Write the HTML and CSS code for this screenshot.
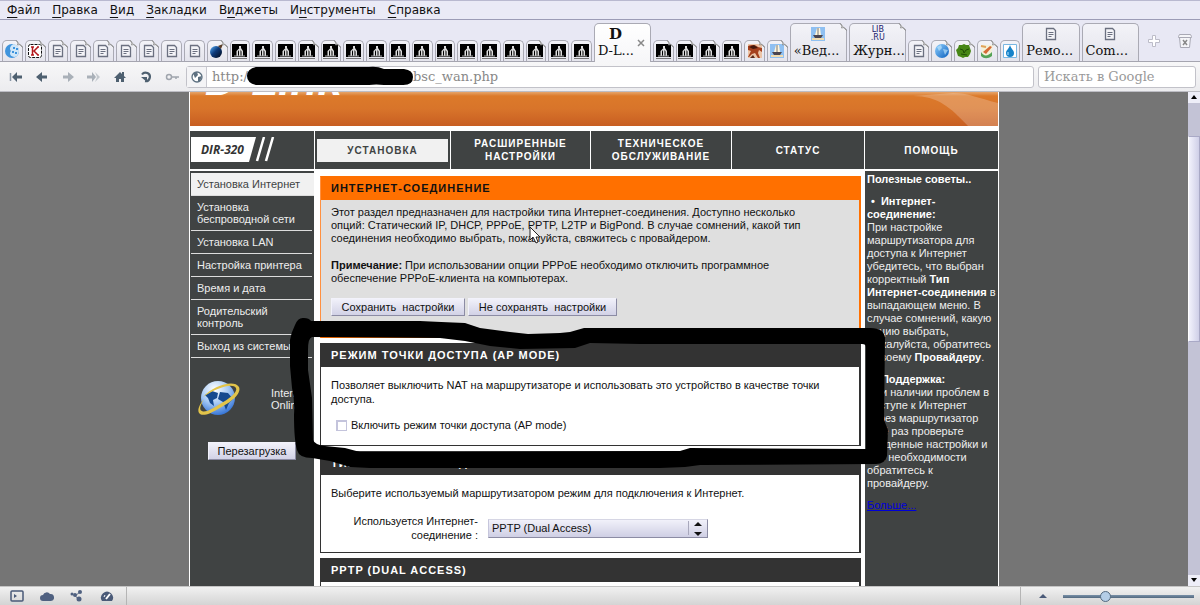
FILE: index.html
```html
<!DOCTYPE html>
<html lang="ru">
<head>
<meta charset="utf-8">
<title>D-Link</title>
<link rel="stylesheet" href="styles.css">
</head>
<body>
<svg class="defs" aria-hidden="true">
  <defs>
    <linearGradient id="ball" x1="0" y1="0" x2="1" y2="1"><stop offset="0" stop-color="#8fd0ff"/><stop offset="1" stop-color="#0b5fbd"/></linearGradient>
    <linearGradient id="bombfill" x1="0" y1="0" x2="1" y2="1"><stop offset="0" stop-color="#58b4ff"/><stop offset=".45" stop-color="#0d3a7a"/><stop offset="1" stop-color="#000818"/></linearGradient>
    <radialGradient id="earthfill" cx=".4" cy=".25" r=".8"><stop offset="0" stop-color="#fff"/><stop offset=".5" stop-color="#a8cbf5"/><stop offset="1" stop-color="#2a6cd4"/></radialGradient>
    <symbol id="doc" viewBox="0 0 16 16"><path d="M3.500 2.500h7l2 2v9h-9z" fill="#f4f4f8" stroke="#6b7080" stroke-width="1.300"/><path d="M5.500 6.500h5M5.500 8.500h5M5.500 10.500h3" stroke="#6b7080"/></symbol>
    <symbol id="n" viewBox="0 0 16 16"><path d="M0 1h15v13H0z"/><path d="M0 15.500h15" stroke="#777"/><path d="M7 3h2v2H7z" fill="#ddd"/><path d="M7.500 5h1.500l2 3v5h-1.500V8.500L8.500 7v6h-1.500V7L6 8.500V13H4.500V8z" fill="#ddd"/><path d="M2 13h11" stroke="#aaa"/></symbol>
    <symbol id="swirl" viewBox="0 0 16 16"><circle cx="8" cy="8" r="7" fill="#3f94dd"/><path d="M10 1a7 7 0 0 1 1 13c-5 0-6-4-4-6-2-2-1-6 3-7z" fill="#cfe6f8"/><path d="M9 4h2v2H9zM12 5h2v2h-2zM8 8h2v2H8zM11 9h2v2h-2z" fill="#3f94dd"/></symbol>
    <symbol id="k" viewBox="0 0 16 16"><rect x="1.500" y="1.500" width="13" height="13" rx="2" fill="#fff" stroke="#111" stroke-dasharray="3 1"/><path d="M5.500 4v8M11 4L7 8l4 4M4 4h3M4 12h3M10 4h2M10 12h2" stroke="#b3161b" stroke-width="1.500" fill="none"/></symbol>
    <symbol id="bomb" viewBox="0 0 16 16"><circle cx="7" cy="9" r="6" fill="url(#bombfill)"/><path d="M9 3l3 3 2-5z" fill="#5a3d28"/></symbol>
    <symbol id="fox" viewBox="0 0 16 16"><path d="M1 1h14v14H1z" fill="#ecc5a8"/><path d="M1 3c5-2 8-1 10 1l4 1v4l-3-2-1 3 2 5h-2l-3-5-3 1-3 3H1l3-6-3-1z" fill="#a5401d"/><path d="M2 4l5-2 4 3-5 1z" fill="#43180c"/><path d="M3 15l3-3 2 3z" fill="#5a2a1a"/></symbol>
    <symbol id="ship" viewBox="0 0 16 16"><path d="M1 1h14v14H1z" fill="#8fc0f2"/><path d="M7 2h3l1 7H5z" fill="#fff5dc"/><path d="M3 9h10l-2 3H5z" fill="#4a4550"/><path d="M8 2v7" stroke="#777"/><path d="M2 12h12v2H2z" fill="#f0dcb0"/></symbol>
    <symbol id="globe" viewBox="0 0 16 16"><circle cx="8" cy="8" r="7" fill="url(#ball)"/><path d="M3 4l4-2 1 3-3 3zM9 6l5 1-3 5z" fill="#c8ecff" opacity=".6"/></symbol>
    <symbol id="green" viewBox="0 0 16 16"><path d="M8 1l2 1 3 0 1 3 1 3-1 3-2 3-3 0-2 1-2-1-3-1-1-3-1-3 2-2 1-3 3 0z" fill="#478616"/><path d="M4 6l3 1 1 3 2-3 3-1M5 11l6 1" stroke="#214f07" fill="none"/></symbol>
    <symbol id="pen" viewBox="0 0 16 16"><path d="M2 2h12l-2 12H3z" fill="#f4f1d7"/><path d="M2 9c3 5 7 4 11 0v4c-4 3-8 3-11 0z" fill="#54a356"/><path d="M4 9l7-6 2 1-6 7z" fill="#d56b36"/><path d="M2 3l5 1" stroke="#e0a25c" stroke-width="2"/></symbol>
    <symbol id="drop" viewBox="0 0 16 16"><path d="M1.500 1.500h13v13h-13z" fill="#fff" stroke="#79b7e2"/><path d="M8 2c1 4 4 5 4 8a4 4 0 0 1-8 0c0-3 3-4 4-8z" fill="#1683c9"/><path d="M6 9v3" stroke="#b9e4ff"/></symbol>
    <symbol id="fold" viewBox="0 0 8 8"><path d="M1 0L8 7V0z" fill="#e7e7f3"/><path d="M1 .5C3 1 3 3 2.500 5 5 4 7 5 7.500 7.500z" fill="#fafafa" stroke="#888" stroke-width=".8"/></symbol>
  </defs>
</svg>

<nav class="menubar">
  <a href="#"><u>Ф</u>айл</a><a href="#"><u>П</u>равка</a><a href="#"><u>В</u>ид</a><a href="#"><u>З</u>акладки</a><a href="#">В<u>и</u>джеты</a><a href="#">И<u>н</u>струменты</a><a href="#"><u>С</u>правка</a>
</nav>

<div class="tabbar">
  <div class="tabs">
    <button class="tab" aria-label="Вкладка"><svg class="ico"><use href="#swirl"/></svg><svg class="fold"><use href="#fold"/></svg></button>
    <button class="tab" aria-label="Вкладка"><svg class="ico"><use href="#k"/></svg><svg class="fold"><use href="#fold"/></svg></button>
    <button class="tab" aria-label="Вкладка"><svg class="ico"><use href="#doc"/></svg><svg class="fold"><use href="#fold"/></svg></button>
    <button class="tab" aria-label="Вкладка"><svg class="ico"><use href="#doc"/></svg><svg class="fold"><use href="#fold"/></svg></button>
    <button class="tab" aria-label="Вкладка"><svg class="ico"><use href="#doc"/></svg><svg class="fold"><use href="#fold"/></svg></button>
    <button class="tab" aria-label="Вкладка"><svg class="ico"><use href="#doc"/></svg><svg class="fold"><use href="#fold"/></svg></button>
    <button class="tab" aria-label="Вкладка"><svg class="ico"><use href="#doc"/></svg><svg class="fold"><use href="#fold"/></svg></button>
    <button class="tab" aria-label="Вкладка"><svg class="ico"><use href="#doc"/></svg></button>
    <button class="tab" aria-label="Вкладка"><svg class="ico"><use href="#doc"/></svg></button>
    <button class="tab" aria-label="Вкладка"><svg class="ico"><use href="#bomb"/></svg><svg class="fold"><use href="#fold"/></svg></button>
    <button class="tab" aria-label="Вкладка"><svg class="ico"><use href="#n"/></svg></button>
    <button class="tab" aria-label="Вкладка"><svg class="ico"><use href="#n"/></svg></button>
    <button class="tab" aria-label="Вкладка"><svg class="ico"><use href="#n"/></svg></button>
    <button class="tab" aria-label="Вкладка"><svg class="ico"><use href="#n"/></svg><svg class="fold"><use href="#fold"/></svg></button>
    <button class="tab" aria-label="Вкладка"><svg class="ico"><use href="#n"/></svg><svg class="fold"><use href="#fold"/></svg></button>
    <button class="tab" aria-label="Вкладка"><svg class="ico"><use href="#n"/></svg></button>
    <button class="tab" aria-label="Вкладка"><svg class="ico"><use href="#n"/></svg></button>
    <button class="tab" aria-label="Вкладка"><svg class="ico"><use href="#n"/></svg></button>
    <button class="tab" aria-label="Вкладка"><svg class="ico"><use href="#n"/></svg></button>
    <button class="tab" aria-label="Вкладка"><svg class="ico"><use href="#n"/></svg></button>
    <button class="tab" aria-label="Вкладка"><svg class="ico"><use href="#n"/></svg></button>
    <button class="tab" aria-label="Вкладка"><svg class="ico"><use href="#n"/></svg></button>
    <button class="tab" aria-label="Вкладка"><svg class="ico"><use href="#n"/></svg></button>
    <button class="tab" aria-label="Вкладка"><svg class="ico"><use href="#n"/></svg><svg class="fold"><use href="#fold"/></svg></button>
    <button class="tab" aria-label="Вкладка"><svg class="ico"><use href="#n"/></svg></button>
    <button class="tab" aria-label="Вкладка"><svg class="ico"><use href="#n"/></svg></button>
    <button class="tab wide active"><span class="dico">D</span><span class="cap">D-L...</span><svg class="close" viewBox="0 0 8 8"><path d="M1 1l6 6M7 1L1 7" stroke="#888" stroke-width="1.500"/></svg></button>
    <button class="tab" aria-label="Вкладка"><svg class="ico"><use href="#n"/></svg><svg class="fold"><use href="#fold"/></svg></button>
    <button class="tab" aria-label="Вкладка"><svg class="ico"><use href="#n"/></svg><svg class="fold"><use href="#fold"/></svg></button>
    <button class="tab" aria-label="Вкладка"><svg class="ico"><use href="#n"/></svg><svg class="fold"><use href="#fold"/></svg></button>
    <button class="tab" aria-label="Вкладка"><svg class="ico"><use href="#n"/></svg></button>
    <button class="tab" aria-label="Вкладка"><svg class="ico"><use href="#fox"/></svg><svg class="fold"><use href="#fold"/></svg></button>
    <button class="tab" aria-label="Вкладка"><svg class="ico"><use href="#ship"/></svg><svg class="fold"><use href="#fold"/></svg></button>
    <button class="tab wide"><svg class="ico"><use href="#ship"/></svg><span class="cap">«Вед...</span><svg class="fold"><use href="#fold"/></svg></button>
    <button class="tab wide"><span class="lib">LIB<br>.RU</span><span class="cap">Журн...</span><svg class="fold"><use href="#fold"/></svg></button>
    <button class="tab" aria-label="Вкладка"><svg class="ico"><use href="#doc"/></svg><svg class="fold"><use href="#fold"/></svg></button>
    <button class="tab" aria-label="Вкладка"><svg class="ico"><use href="#globe"/></svg><svg class="fold"><use href="#fold"/></svg></button>
    <button class="tab" aria-label="Вкладка"><svg class="ico"><use href="#green"/></svg><svg class="fold"><use href="#fold"/></svg></button>
    <button class="tab" aria-label="Вкладка"><svg class="ico"><use href="#pen"/></svg><svg class="fold"><use href="#fold"/></svg></button>
    <button class="tab" aria-label="Вкладка"><svg class="ico"><use href="#drop"/></svg></button>
    <button class="tab wide"><svg class="ico"><use href="#doc"/></svg><span class="cap">Ремо...</span></button>
    <button class="tab wide"><svg class="ico"><use href="#doc"/></svg><span class="cap">Com...</span></button>
  </div>
  <div class="tabtools">
    <button class="plain" aria-label="Новая вкладка"><svg width="14" height="14" viewBox="0 0 14 14"><path d="M5.500 1.500h3v4h4v3h-4v4h-3v-4h-4v-3h4z" fill="#fff" stroke="#bcbcc8"/></svg></button>
    <button class="plain" aria-label="Закрытые вкладки"><svg width="16" height="16" viewBox="0 0 16 16"><path d="M1.500 3.500l1-2h11l1 2v1h-13zM2.500 4.500h11l-1 10h-9z" fill="#f5f5f8" stroke="#a9a9b4"/><path d="M6 7l4 5M10 7l-4 5" stroke="#888" stroke-width="1.500"/></svg></button>
  </div>
</div>

<div class="toolbar">
  <div class="navbtns">
    <button class="plain" aria-label="В начало"><svg width="14" height="12" viewBox="0 0 14 12"><path d="M1.500 2v8" stroke="#8896a5" stroke-width="1.500"/><path d="M3 6l5-5v3.500h5v3H8V11z" fill="#4e6070"/></svg></button>
    <button class="plain" aria-label="Назад"><svg width="14" height="12" viewBox="0 0 14 12"><path d="M1 6l6-5v3.500h5v3H7V11z" fill="#4e6070"/></svg></button>
    <button class="plain" aria-label="Вперёд"><svg width="14" height="12" viewBox="0 0 14 12"><path d="M13 6L7 1v3.500H2v3h5V11z" fill="#a9b0b8"/></svg></button>
    <button class="plain" aria-label="Перемотка"><svg width="14" height="12" viewBox="0 0 14 12"><path d="M9 6L5 1v3.500H0v3h5V11z" fill="#a9b0b8"/><path d="M8 1l5 5-5 5 2-5z" fill="#c3c8cd"/></svg></button>
    <button class="plain" aria-label="Домой"><svg width="14" height="12" viewBox="0 0 14 12"><path d="M1 7l6-6 2 2V1h2v4l2 2h-2v4H8V8H6v3H3V7z" fill="#4e6070"/></svg></button>
    <button class="plain" aria-label="Обновить"><svg width="14" height="12" viewBox="0 0 14 12"><path d="M3 3.500A4.300 4.300 0 1 1 6 10.200" fill="none" stroke="#4e6070" stroke-width="2.200"/><path d="M2 6h6v5z" fill="#4e6070"/></svg></button>
    <button class="plain" aria-label="Пароль"><svg width="14" height="12" viewBox="0 0 14 12"><circle cx="4" cy="6" r="2.500" fill="none" stroke="#a0a5ad" stroke-width="1.500"/><path d="M6 6h8M11 6v2" stroke="#a0a5ad" stroke-width="1.500"/></svg></button>
  </div>
  <div class="address">
    <span class="site"><svg width="12" height="12" viewBox="0 0 12 12"><circle cx="6" cy="6" r="5" fill="#fff" stroke="#5d7080" stroke-width="1.300"/><path d="M2 2l4-1 1 3-3 3zM7 6l4-1-2 5-2 1z" fill="#5d7080"/></svg></span>
    <input type="text" class="scheme" aria-label="Протокол" value="http:/">
    <input type="text" class="path" aria-label="Адрес" value="bsc_wan.php">
    <svg class="redact" viewBox="0 0 168 20"><path d="M10 1H123q8-1 15 2h20q9 1 9 8 0 9-12 8h-17q-8-1-15 0H70L10 19Q1 17 1 10 1 3 10 1z"/></svg>
  </div>
  <input type="text" class="search" aria-label="Поиск" placeholder="Искать в Google">
</div>

<main class="viewport">
  <div class="canvas">
    <div class="page">
      <header class="banner"><span class="brand">D-Link</span><svg class="swoosh" viewBox="0 0 90 34" preserveAspectRatio="none"><path d="M5 4C30 4 42 15 60 34H90V11C70 6 60 1 45 1z" fill="#fff" opacity=".22"/></svg></header>
      <nav class="topnav">
        <div class="model"><svg viewBox="0 0 84 26"><path d="M0 0h65l-7 25H0z" fill="#fff"/><path d="M73 0l-7 24M82 0l-7 24" stroke="#fff" stroke-width="2.500"/><text x="10" y="17">DIR-320</text></svg></div>
        <a href="#" class="sel"><span>УСТАНОВКА</span></a>
        <a href="#"><span>РАСШИРЕННЫЕ<br>НАСТРОЙКИ</span></a>
        <a href="#"><span>ТЕХНИЧЕСКОЕ<br>ОБСЛУЖИВАНИЕ</span></a>
        <a href="#"><span>СТАТУС</span></a>
        <a href="#"><span>ПОМОЩЬ</span></a>
      </nav>
      <div class="columns">
        <aside class="side">
          <a href="#" class="cur">Установка Интернет</a>
          <a href="#">Установка<br>беспроводной сети</a>
          <a href="#">Установка LAN</a>
          <a href="#">Настройка принтера</a>
          <a href="#">Время и дата</a>
          <a href="#">Родительский<br>контроль</a>
          <a href="#">Выход из системы</a>
          <div class="online">
            <svg width="46" height="42" viewBox="0 0 46 42"><circle cx="22" cy="20" r="17" fill="url(#earthfill)"/><path d="M9 17l7-4 6 2-1 5-4 2 1 6-4-3-2-5zM24 14l8 1 5 6-4 4-3 7-3-8-5-3z" fill="#15498f"/><path d="M7 19C17 8 38 1 43 9c3 7-9 16-21 22-8 5-16 8-19 4-2-4 1-9 5-14-4 7-5 11-2 12 3 2 10-2 18-7 9-5 18-12 16-16C37 5 22 9 7 19z" fill="#e2c44a"/></svg>
            <span>Internet<br>Online</span>
          </div>
          <button class="btn reboot">Перезагрузка</button>
        </aside>
        <section class="content">
          <div class="panel orange">
            <h2>ИНТЕРНЕТ-СОЕДИНЕНИЕ</h2>
            <div class="body">
              <p>Этот раздел предназначен для настройки типа Интернет-соединения. Доступно несколько<br>опций: Статический IP, DHCP, PPPoE, PPTP, L2TP и BigPond. В случае сомнений, какой тип<br>соединения необходимо выбрать, пожалуйста, свяжитесь с провайдером.</p>
              <p><b>Примечание:</b> При использовании опции PPPoE необходимо отключить программное<br>обеспечение PPPoE-клиента на компьютерах.</p>
              <div class="btns"><button class="btn save">Сохранить&nbsp; настройки</button><button class="btn nosave">Не сохранять&nbsp; настройки</button></div>
            </div>
          </div>
          <div class="panel">
            <h2>РЕЖИМ ТОЧКИ ДОСТУПА (AP MODE)</h2>
            <div class="body ap">
              <p>Позволяет выключить NAT на маршрутизаторе и использовать это устройство в качестве точки<br>доступа.</p>
              <label class="check"><input type="checkbox">Включить режим точки доступа (AP mode)</label>
            </div>
          </div>
          <div class="panel">
            <h2>ТИП ИНТЕРНЕТ-СОЕДИНЕНИЯ</h2>
            <div class="body type">
              <p>Выберите используемый маршрутизатором режим для подключения к Интернет.</p>
              <div class="field">
                <label for="conn">Используется Интернет-<br>соединение :</label>
                <span class="selwrap"><select id="conn"><option>PPTP (Dual Access)</option></select><svg width="20" height="18" viewBox="0 0 20 18"><path d="M.5 2v14" stroke="#a8a8bc"/><path d="M10 3l4 4H6zM10 17l4-4H6z" fill="#111"/></svg></span>
              </div>
            </div>
          </div>
          <div class="panel">
            <h2>PPTP (DUAL ACCESS)</h2>
            <div class="body last"></div>
          </div>
        </section>
        <aside class="tips">
          <p><b>Полезные советы..</b></p>
          <p><b class="dot">•&nbsp; Интернет-</b><br><b>соединение:</b><br>При настройке<br>маршрутизатора для<br>доступа к Интернет<br>убедитесь, что выбран<br>корректный <b>Тип<br>Интернет-соединения</b> в<br>выпадающем меню. В<br>случае сомнений, какую<br>опцию выбрать,<br>пожалуйста, обратитесь<br>к своему <b>Провайдеру</b>.</p>
          <p><b class="dot">•&nbsp; Поддержка:</b><br>При наличии проблем в<br>доступе к Интернет<br>через маршрутизатор<br>ещё раз проверьте<br>введенные настройки и<br>при необходимости<br>обратитесь к<br>провайдеру.</p>
          <p><a href="#">Больше...</a></p>
        </aside>
      </div>
      <svg class="marker" viewBox="190 92 808 495"><path fill-rule="evenodd" d="M290 366V340Q291 333 295 325 298 317 304 318 309 318 311 321H420Q440 322 465 323L480 328 510 332 528 334 560 333 570 332 584 328H868Q884 327 885 338L884 420 888 430 887 456Q885 464 876 464L700 465 685 467 660 468H370L350 467 330 461 312 458Q299 458 297 450 294 440 294 415 295 400 292 388zM312 337Q308 338 308 350L308 370 312 398 313 440Q315 445 325 446L345 448 360 452 460 452 680 451 690 448 866 449V347Q866 344 862 344H640L590 343 575 348 520 349 490 346 465 341 440 338z"/></svg>
      <svg class="cursor" viewBox="0 0 14 18"><path d="M1 1v13l3-3 3 6 2-1-2-5h4z" fill="#fff" stroke="#222"/></svg>
    </div>
  </div>
  <div class="scroll"><button class="arrow" aria-label="Вверх"><svg width="10" height="10" viewBox="0 0 10 10"><path d="M5 3l3 4H2z"/></svg></button><div class="track"><div class="thumb"></div></div><button class="arrow" aria-label="Вниз"><svg width="10" height="10" viewBox="0 0 10 10"><path d="M5 7l3-4H2z"/></svg></button></div>
</main>

<footer class="status">
  <div class="stleft">
    <button class="plain" aria-label="Панели"><svg width="14" height="12" viewBox="0 0 14 12"><rect x="1" y="1" width="12" height="10" rx="1" fill="none" stroke="#4a5a78" stroke-width="1.500"/><path d="M4 4l3 2-3 2z" fill="#4a5a78"/></svg></button>
    <button class="plain" aria-label="Синхронизация"><svg width="14" height="12" viewBox="0 0 14 12"><path d="M3 11a3 3 0 0 1 0-6 4 4 0 0 1 7-1 3 3 0 0 1 1 7z" fill="#4f6080"/></svg></button>
    <button class="plain" aria-label="Unite"><svg width="14" height="12" viewBox="0 0 14 12"><path d="M5 6l5-4M5 6l4 3" stroke="#5d6b85"/><circle cx="5" cy="5" r="2" fill="#4f6080"/><circle cx="2" cy="4" r="1.500" fill="#4f6080"/><circle cx="10" cy="2" r="2" fill="#4f6080"/><circle cx="9" cy="9" r="2.500" fill="#4f6080"/></svg></button>
    <button class="plain" aria-label="Turbo"><svg width="14" height="12" viewBox="0 0 14 12"><path d="M2 11a6 6 0 1 1 10 0z" fill="#4a5a78"/><path d="M6 9l4-5" stroke="#fff" stroke-width="2"/><path d="M4 7l1-2" stroke="#fff"/></svg></button>
  </div>
  <div class="stright">
    <button class="plain" aria-label="Масштаб"><svg width="10" height="6" viewBox="0 0 10 6"><path d="M5 1l4 4H1z" fill="#4a5a78"/></svg></button>
    <input type="range" class="zoom" aria-label="Масштаб" min="0" max="100" value="31">
  </div>
</footer>
</body>
</html>
```
FILE: styles.css
```css
* { box-sizing: border-box; }
body { margin: 0; height: 100vh; display: flex; flex-direction: column; overflow: hidden; background: #e8e8f4; font-family: "Liberation Sans", Arial, sans-serif; font-size: 11px; color: #111; }
button, input, select { font: inherit; color: inherit; margin: 0; }
a { color: inherit; text-decoration: none; }
.defs { position: absolute; width: 0; height: 0; }
.plain { border: 0; padding: 0; background: none; display: flex; }

.menubar { display: flex; gap: 12px; height: 20px; padding: 0 7px; align-items: center; font: 12px/18px "DejaVu Sans", Verdana, sans-serif; border-top: 1px solid #b9b9d0; border-bottom: 1px solid #9c9cb6; background: #eaeaf6; flex: none; }
.menubar u { text-underline-offset: 3px; }

.tabbar { display: flex; height: 42px; flex: none; border-bottom: 1px solid #a5a5b0; background: #e8e8f4; }
.tabs { flex: 1; display: flex; gap: 2px; padding: 3px 0 0 2px; align-items: flex-end; min-width: 0; }
.tab { position: relative; flex: 19 1 0; min-width: 0; height: 21px; padding: 0; display: flex; justify-content: center; align-items: center; border: 1px solid #aaaab4; border-bottom: 0; border-radius: 5px 5px 0 0; background: linear-gradient(#f3f3f8, #e4e4ec); }
.ico { width: 16px; height: 16px; flex: none; }
.fold { position: absolute; top: -1px; right: -1px; width: 8px; height: 8px; }
.tab.wide { flex: 56 1 0; height: 38px; flex-direction: column; justify-content: flex-start; align-items: center; padding-top: 2px; }
.cap { align-self: flex-start; padding-left: 3px; font: 13px/18px "DejaVu Serif", serif; white-space: nowrap; }
.tab.active { background: linear-gradient(#fff, #f6f6f8); height: 39px; margin-bottom: -1px; padding-bottom: 1px; }
.dico { font: bold 15px/17px "DejaVu Serif", serif; height: 16px; padding-right: 14px; }
.close { position: absolute; right: 5px; top: 15px; width: 8px; height: 8px; }
.lib { font: 8px/8px "DejaVu Sans", sans-serif; color: #1b1b6e; height: 16px; }
.tabtools { width: 61px; flex: none; display: flex; justify-content: space-between; align-items: center; padding: 0 7px 0 8px; }

.toolbar { display: flex; height: 30px; flex: none; align-items: center; padding: 0 4px 0 9px; background: linear-gradient(#f7f7f8, #ececef); border-bottom: 1px solid #bdbdc4; font: 13px/20px "DejaVu Serif", serif; color: #888; }
.navbtns { display: flex; gap: 12px; width: 177px; flex: none; }
.navbtns svg { display: block; }
.address { position: relative; flex: 1; display: flex; height: 22px; background: #fff; border: 1px solid #c2c2c9; border-radius: 3px; }
.site { width: 20px; display: flex; align-items: center; justify-content: center; border-right: 1px solid #c9c9d0; background: #f4f4f6; }
.address input { border: 0; padding: 0; background: none; outline: 0; min-width: 0; }
.address .scheme { width: 206px; padding-left: 5px; }
.path { flex: 1; }
.redact { position: absolute; left: 59px; top: -1px; width: 168px; height: 20px; }
.toolbar .search { width: 158px; height: 22px; margin-left: 4px; padding: 0 5px; border: 1px solid #c2c2c9; border-radius: 3px; background: #fff; }
.search::placeholder { color: #999; opacity: 1; }

.viewport { flex: 1; min-height: 0; display: flex; background: #757575; }
.canvas { flex: 1; overflow: hidden; min-width: 0; }
.page { position: relative; width: 68%; min-width: 810px; max-width: 900px; margin: 0 auto; border: 0 solid #fff; border-width: 0 1px; background: #fff; }
.banner { position: relative; height: 34px; overflow: hidden; background: linear-gradient(#e6a56b, #dc7a2a 4px, #d8742a 50%, #c85e22); }
.brand { display: block; margin: -35px 0 0 15px; font: italic bold 44px/46px "Liberation Sans", sans-serif; color: #fff; }
.swoosh { position: absolute; right: 0; top: 0; width: 90px; height: 34px; }
.topnav { display: grid; grid-template-columns: 124px 135fr 139fr 140fr 132fr 133px; column-gap: 1px; margin-top: 5px; height: 38px; background: #fff; color: #fff; font-weight: bold; font-size: 10px; line-height: 13px; letter-spacing: 1px; text-align: center; }
.topnav > * { background: #404343; display: flex; align-items: center; justify-content: center; }
.topnav .sel { padding: 2px; }
.topnav .sel span { flex: 1; padding: 5px 0; background: #f1f1f1; color: #404343; }
.topnav .model { justify-content: flex-start; padding-left: 1px; }
.model svg { width: 84px; height: 26px; }
.model text { font: italic bold 12px "Open Sans", sans-serif; letter-spacing: 0; fill: #333; }
.columns { display: grid; grid-template-columns: 124px 1fr 133px; margin-top: 2px; min-height: 430px; }
.side { background: #404343; color: #eee; padding: 2px 2px 0 1px; line-height: 12px; font-size: 11px; white-space: nowrap; }
.side > a { display: block; padding: 5px 0 5px 6px; border-bottom: 1px solid #ddd; }
.side > a.cur { background: #f1f1f1; color: #404343; margin-right: -2px; }
.online { display: flex; gap: 29px; align-items: center; padding: 20px 0 0 5px; }
.btn { height: 18px; padding: 0; border: 1px solid; border-color: #f2f2fb #8c8ca4 #8c8ca4 #f2f2fb; outline: 0; background: linear-gradient(#f1f1fa, #d2d2e6); color: #111; font-size: 11px; line-height: 14px; white-space: nowrap; }
.reboot { display: block; width: 88px; margin: 22px 0 0 17px; }
.content { padding: 5px 4px 0 6px; display: flex; flex-direction: column; gap: 5px; min-width: 0; }
.panel { border: 1px solid #333; border-right-width: 2px; }
.panel h2 { margin: 0; padding: 0 10px; background: #333; color: #fff; font-size: 11px; line-height: 23px; letter-spacing: 1px; }
.panel.orange { border-color: #ff7000 #ff7000 #ff7000 #ff9040; }
.orange h2 { background: #ff7000; color: #111; }
.body { padding: 5px 10px; background: #fff; line-height: 14px; }
.orange .body { background: #dfdfdf; line-height: 13px; padding: 6px 10px 21px; }
.body p { margin: 0 0 14px; white-space: nowrap; }
.btns { display: flex; gap: 3px; margin-top: -1px; }
.save { width: 134px; }
.nosave { width: 149px; }
.body.ap { padding-top: 11px; padding-bottom: 13px; }
.check { display: flex; align-items: center; gap: 4px; padding-left: 5px; margin-top: -2px; }
.check input { appearance: none; width: 11px; height: 11px; border: 2px solid #c4c4dc; border-right-width: 1px; border-bottom-width: 1px; background: #fff; }
.body.type { padding-top: 11px; padding-bottom: 10px; }
.field { display: flex; gap: 10px; align-items: center; }
.field label { width: 147px; text-align: right; }
.selwrap { position: relative; width: 220px; }
.selwrap select { display: block; appearance: none; width: 100%; height: 19px; padding: 0 3px; border: 1px solid; border-color: #d6d6e4 #8c8ca4 #8c8ca4 #c6c6dc; border-radius: 0; background: linear-gradient(#f1f1fa, #cfcfe4); }
.selwrap svg { position: absolute; right: 0; top: 0; }
.last { height: 40px; }
.tips { background: #404343; color: #eee; font-size: 11px; line-height: 13px; padding: 2px 0 0 2px; }
.tips p { margin: 0 0 9px; white-space: nowrap; }
.tips b { color: #fff; }
.dot { padding-left: 4px; }
.tips a { color: #0000d8; text-decoration: underline; }
.marker { position: absolute; left: 0; top: 0; width: 100%; height: auto; pointer-events: none; }
.cursor { position: absolute; left: 339px; top: 134px; width: 14px; height: 18px; }

.scroll { width: 12px; flex: none; display: flex; flex-direction: column; background: #c3c3d6; }
.arrow { border: 0; padding: 0 0 0 1px; height: 11px; background: #eeeef8; display: flex; }
.track { flex: 1; padding-top: 33px; }
.thumb { height: 47%; background: linear-gradient(90deg, #f2f2fc, #cfcfe8); border: 1px solid #a9a9c6; border-left-color: #fff; }

.status { height: 19px; flex: none; display: flex; justify-content: space-between; border-top: 1px solid #c4c4c4; background: linear-gradient(#f1f1f1, #d4d4d4); }
.stleft { display: flex; gap: 16px; align-items: center; padding: 0 12px 0 10px; border-right: 1px solid #b5b5b5; }
.stright { display: flex; align-items: center; gap: 15px; width: 180px; padding: 0 6px 0 17px; border-left: 1px solid #b5b5b5; }
.zoom { appearance: none; flex: 1; min-width: 0; height: 12px; background: linear-gradient(#7890a8, #53697f) center / 100% 3px no-repeat; }
.zoom::-webkit-slider-thumb { appearance: none; width: 11px; height: 11px; border-radius: 50%; border: 1px solid #53697f; background: #b4cde6; }
```
